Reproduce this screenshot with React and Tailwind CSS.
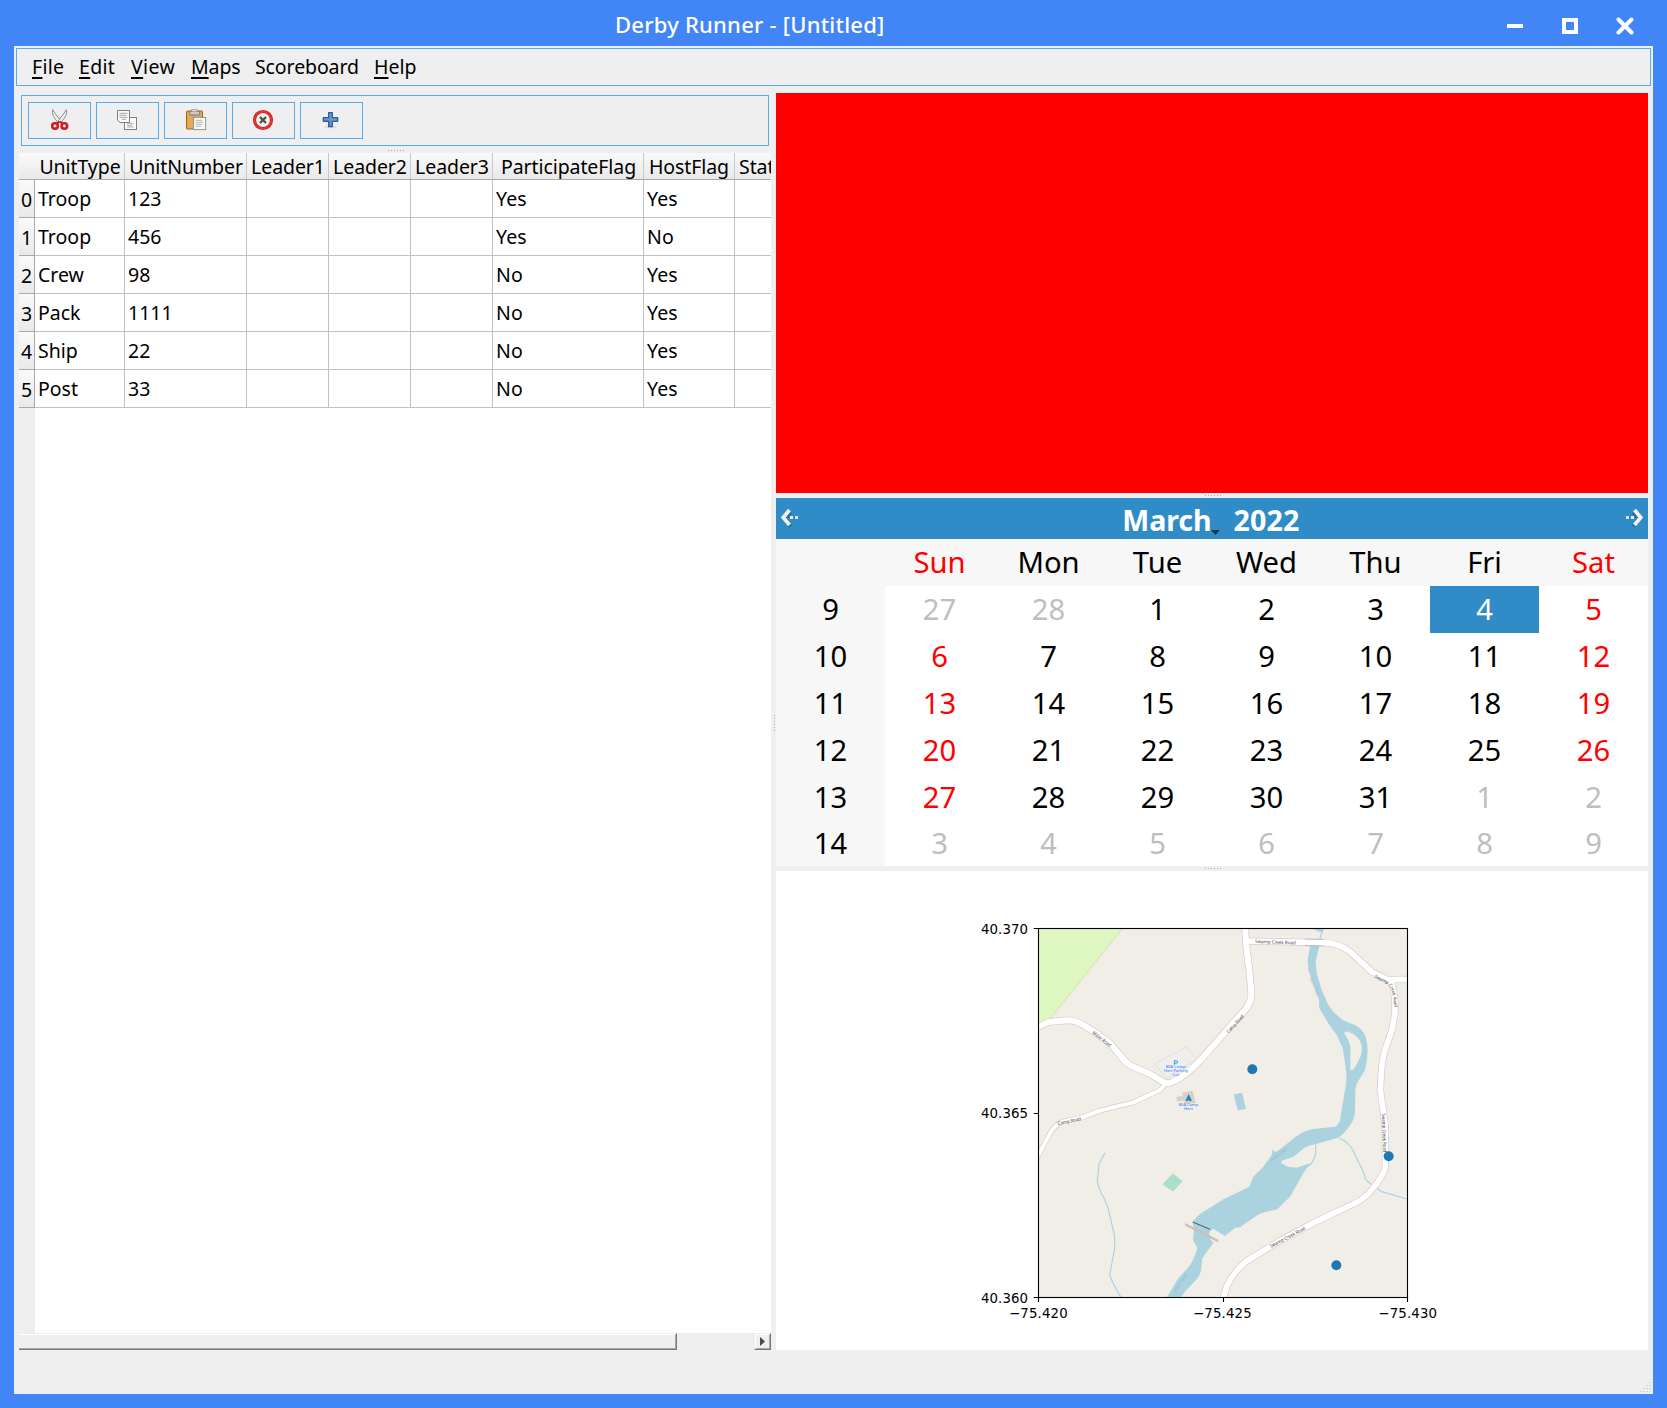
import React from "react";

const UI = "font-['Noto_Sans',sans-serif]";

/* ---------- toolbar icons ---------- */

function CutIcon() {
  return (
    <svg className="h-[23px] w-[23px]" viewBox="144 327 69 69" fill="none">
      <path d="M158 329 Q153 346 175 368 L182 362 Q167 344 158 329Z" fill="#f0f0ee" stroke="#858783" strokeWidth="2.8" />
      <path d="M199 329 Q204 346 182 368 L175 362 Q190 344 199 329Z" fill="#f0f0ee" stroke="#858783" strokeWidth="2.8" />
      <ellipse cx="165" cy="378" rx="8.5" ry="8" stroke="#cc1a1f" strokeWidth="7.5" />
      <ellipse cx="193" cy="378" rx="8.5" ry="8" stroke="#cc1a1f" strokeWidth="7.5" />
      <path d="M171 370 L178 365 M187 370 L180 365" stroke="#cc1a1f" strokeWidth="6" />
    </svg>
  );
}

function CopyIcon() {
  return (
    <svg className="h-[23px] w-[23px]" viewBox="348 327 69 69" fill="none" strokeWidth="3">
      <rect x="373.5" y="352.5" width="36" height="36" fill="#fafafa" stroke="#7f817c" />
      <path d="M381 371h19M381 376h16M381 381h19" stroke="#b0b2ae" />
      <path d="M352.5 331.500h36v36h-28l-8-7z" fill="#fafafa" stroke="#7f817c" />
      <path d="M358 340h24M358 346h21M358 352h24M366 358h12" stroke="#a6a8a4" />
    </svg>
  );
}

function PasteIcon() {
  return (
    <svg className="h-[23px] w-[23px]" viewBox="552 327 69 69" fill="none">
      <rect x="559.5" y="333" width="48" height="54" rx="3" fill="#e0ab5b" stroke="#a4660b" strokeWidth="3" />
      <rect x="569" y="334" width="30" height="11" rx="2" fill="#c9cbc7" stroke="#6c6e6a" strokeWidth="2.5" />
      <path d="M575 334v-5h17v5" fill="#eee" stroke="#888a85" strokeWidth="2.5" />
      <rect x="581" y="352" width="36" height="37" fill="#fafafa" stroke="#888a85" strokeWidth="2.6" />
      <path d="M587 361h20M587 367h23M587 373h20M587 379h16" stroke="#a9aba7" strokeWidth="2.5" />
    </svg>
  );
}

function StopIcon() {
  return (
    <svg className="h-[23px] w-[23px]" viewBox="756 327 69 69" fill="none">
      <circle cx="789" cy="360" r="25.5" fill="#f2f2f0" stroke="#d81e21" strokeWidth="9.5" />
      <circle cx="789" cy="360" r="25.5" stroke="#f26b6b" strokeWidth="1.5" />
      <path d="M780 351l18 18M798 351l-18 18" stroke="#4d504c" strokeWidth="7" />
    </svg>
  );
}

function AddIcon() {
  return (
    <svg className="h-[23px] w-[23px]" viewBox="960 327 69 69" fill="none">
      <ellipse cx="992" cy="381" rx="20" ry="4" fill="#dcdcdc" />
      <path
        d="M986 338h11v15h16v11h-16v16h-11v-16h-16v-11h16z"
        fill="#6b99cb"
        stroke="#2d5c9c"
        strokeWidth="4"
        strokeLinejoin="round"
      />
      <path d="M989 363v14M973 361h14" stroke="#4a7ab8" strokeWidth="3" />
    </svg>
  );
}

function Grip({ vertical }) {
  return (
    <span className={vertical ? "flex flex-col gap-[2px]" : "flex gap-[2px]"}>
      {[0, 1, 2, 3, 4, 5].map((i) => (
        <span key={i} className="h-px w-px bg-[#a8a8a8]" />
      ))}
    </span>
  );
}

/* ---------- window chrome ---------- */

function TitleBar() {
  return (
    <header className="flex h-[46px] shrink-0 items-center bg-[#4285f6] text-white">
      <div className="w-[615px]" />
      <h1 className="w-[851px] pt-[1px] text-[22px] leading-[30px] font-medium tracking-[0.23px] whitespace-nowrap">
        Derby Runner - [Untitled]
      </h1>
      <div className="ml-[41px] flex items-center pt-[6px]">
        <span className="h-[4px] w-[16px] bg-white" />
        <span className="ml-[39px] h-[16px] w-[16px] border-4 border-white" />
        <svg className="ml-[38px] h-[18px] w-[18px]" viewBox="0 0 18 18">
          <path d="M2.5 2.5l13 13M15.5 2.5l-13 13" stroke="#fff" strokeWidth="4" strokeLinecap="round" />
        </svg>
      </div>
    </header>
  );
}

const MENUS = [
  { key: "F", rest: "ile", w: "w-[47px]", track: "tracking-[0.3px]" },
  { key: "E", rest: "dit", w: "w-[52px]", track: "tracking-[0.3px]" },
  { key: "V", rest: "iew", w: "w-[60px]", track: "tracking-[0.4px]" },
  { key: "M", rest: "aps", w: "w-[64px]", track: "tracking-[-0.1px]" },
  { key: "", rest: "Scoreboard", w: "w-[119px]", track: "tracking-[-0.1px]" },
  { key: "H", rest: "elp", w: "w-[60px]", track: "tracking-[0px]" },
];

function MenuBar() {
  return (
    <nav className="mx-[2px] mt-[2px] flex h-[38px] shrink-0 border border-[#5aabe9] pl-[15px] text-[19.5px] leading-[36px]">
      {MENUS.map((m) => (
        <span key={m.rest} className={`${m.w} ${m.track} whitespace-nowrap`}>
          {m.key && <span className="underline decoration-2 underline-offset-[3px]">{m.key}</span>}
          {m.rest}
        </span>
      ))}
    </nav>
  );
}

/* ---------- units table ---------- */

const COLS = [
  { name: "UnitType", w: "w-[90px]", pad: "pl-[1px]" },
  { name: "UnitNumber", w: "w-[122px]", pad: "pl-[1px]" },
  { name: "Leader1", w: "w-[82px]", pad: "pl-[1px]" },
  { name: "Leader2", w: "w-[82px]", pad: "pl-[1px]" },
  { name: "Leader3", w: "w-[82px]", pad: "pl-[1px]" },
  { name: "ParticipateFlag", w: "w-[151px]", pad: "pl-[1px]" },
  { name: "HostFlag", w: "w-[91px]", pad: "" },
];

const ROWS = [
  ["Troop", "123", "", "", "", "Yes", "Yes"],
  ["Troop", "456", "", "", "", "Yes", "No"],
  ["Crew", "98", "", "", "", "No", "Yes"],
  ["Pack", "1111", "", "", "", "No", "Yes"],
  ["Ship", "22", "", "", "", "No", "Yes"],
  ["Post", "33", "", "", "", "No", "Yes"],
];

function UnitsTable() {
  return (
    <section className="flex h-[1197px] w-[752px] flex-col overflow-hidden text-[19.5px]">
      <div className="flex h-[27px] shrink-0 border-b border-[#a9a9a9] bg-linear-to-b from-[#fafafa] to-[#e9e9e9] leading-[27px] tracking-[-0.08px]">
        <div className="w-[16px] shrink-0" />
        {COLS.map((c) => (
          <div key={c.name} className={`${c.w} ${c.pad} flex shrink-0 justify-center border-r border-[#c9c9c9] whitespace-nowrap`}>
            {c.name}
          </div>
        ))}
        <div className="shrink-0 pl-[4px]">Stat</div>
      </div>
      {ROWS.map((r, i) => (
        <div key={i} className="flex h-[38px] shrink-0 border-b border-[#c2c2c2] bg-white leading-[37px]">
          <div className="-mb-px h-[38px] w-[16px] shrink-0 border-r border-b border-[#a9a9a9] bg-linear-to-b from-[#fafafa] to-[#e9e9e9] pt-[1px] pl-[2px]">
            {i}
          </div>
          {r.map((v, j) => (
            <div key={j} className={`${COLS[j].w} shrink-0 border-r border-[#c2c2c2] pl-[3px] ${j > 4 ? "tracking-[0.15px]" : ""}`}>
              {v}
            </div>
          ))}
        </div>
      ))}
      <div className="ml-[16px] flex-1 bg-white" />
      <div className="flex h-[17px] shrink-0 justify-between">
        <div className="w-[658px] border-t border-r border-b border-t-[#eee] border-r-[#777] border-b-[#777]">
          <div className="h-full border-t border-r border-b border-t-white border-r-[#aaa] border-b-[#aaa]" />
        </div>
        <div className="h-[17px] w-[17px] border border-t-[#eee] border-r-[#777] border-b-[#777] border-l-[#eee]">
          <div className="flex h-[15px] w-[15px] items-center justify-center border border-t-white border-r-[#aaa] border-b-[#aaa] border-l-white">
            <svg className="h-[9px] w-[5px]" viewBox="0 0 5 9">
              <path d="M0 0L5 4.5L0 9z" fill="#4a4a4a" />
            </svg>
          </div>
        </div>
      </div>
    </section>
  );
}

function LeftPane() {
  const icons = [CutIcon, CopyIcon, PasteIcon, StopIcon, AddIcon];
  return (
    <div className="w-[752px] shrink-0 pt-[2px]">
      <div className="ml-[2px] flex h-[51px] w-[748px] gap-[5px] border border-[#5aabe9] pt-[6px] pl-[6px]">
        {icons.map((Icon, i) => (
          <button key={i} className="flex h-[37px] w-[63px] items-center justify-center border border-[#5aabe9]">
            <Icon />
          </button>
        ))}
      </div>
      <div className="flex h-[7px] items-start justify-center pt-[4px] pl-[1px]">
        <Grip />
      </div>
      <UnitsTable />
    </div>
  );
}

/* ---------- calendar ---------- */

const WEEKS = [
  [9, 27, 28, 1, 2, 3, 4, 5],
  [10, 6, 7, 8, 9, 10, 11, 12],
  [11, 13, 14, 15, 16, 17, 18, 19],
  [12, 20, 21, 22, 23, 24, 25, 26],
  [13, 27, 28, 29, 30, 31, 1, 2],
  [14, 3, 4, 5, 6, 7, 8, 9],
];

function dayClass(week, col, day) {
  if (col === 0) return "bg-[#f7f7f7] text-black";
  if (week === 0 && day > 20) return "text-[#bebebe]";
  if (week >= 4 && day < 10) return "text-[#bebebe]";
  if (week === 0 && day === 4) return "bg-[#308cc6] text-white";
  if (col === 1 || col === 7) return "text-[#ff0000]";
  return "text-black";
}

function NavArrow({ flip }) {
  return (
    <svg className={flip ? "h-[22px] w-[20px] -scale-x-100" : "h-[22px] w-[20px]"} viewBox="0 0 20 22">
      <path d="M10.5 4L4.5 11l6 7" stroke="#1c4f70" strokeOpacity=".5" strokeWidth="4" fill="none" transform="translate(1.2 1.2)" />
      <path d="M10.5 3L4.3 10.500l6.2 7.500" stroke="#f1f1ef" strokeWidth="3.8" fill="none" />
      <rect x="11" y="9" width="3" height="3" fill="#e8eef2" />
      <rect x="16" y="9" width="3" height="3" fill="#d5e2ec" />
    </svg>
  );
}

function Calendar() {
  return (
    <section className="h-[368px] bg-white text-[29.2px]">
      <div className="flex h-[41px] items-center justify-between bg-[#308cc6] px-[3px] font-bold text-white">
        <div className="pb-[2px]"><NavArrow /></div>
        <div className="flex h-[41px] items-start text-[28.6px] leading-[43px]">
          <span className="-ml-[2px] tracking-[-0.1px]">March</span>
          <svg className="mt-[32px] h-[5px] w-[9px]" viewBox="0 0 9 5">
            <path d="M0 0h9L4.5 5z" fill="#10354c" />
          </svg>
          <span className="ml-[13px] tracking-[0.2px]">2022</span>
        </div>
        <div className="pb-[2px]"><NavArrow flip /></div>
      </div>
      <div className="grid h-[47px] grid-cols-8 bg-[#f7f7f7] text-center leading-[47px]">
        <span />
        {["Sun", "Mon", "Tue", "Wed", "Thu", "Fri", "Sat"].map((d) => (
          <span key={d} className={d[0] === "S" ? "text-[#ff0000]" : "text-black"}>
            {d}
          </span>
        ))}
      </div>
      {WEEKS.map((w, i) => (
        <div key={i} className={`grid grid-cols-8 text-center ${i === 5 ? "h-[45px] leading-[45px]" : "h-[47px] leading-[47px]"}`}>
          {w.map((d, j) => (
            <span key={j} className={dayClass(i, j, d)}>
              {d}
            </span>
          ))}
        </div>
      ))}
    </section>
  );
}

/* ---------- map chart ---------- */

const ROADS = [
  { w: 18, d: "M825 50L830 120L838 180L844 250Q845 275 825 300L790 338L690 452Q640 505 600 519Q585 522 575 513L540 492L485 468Q465 458 450 435L420 400L380 370L340 345Q315 331 295 331L240 335Q222 340 200 354" },
  { w: 12, d: "M583 522Q578 538 560 545L490 577L390 602L330 624L275 636Q255 645 240 670L200 745" },
  { w: 17, d: "M830 93L1060 98Q1110 100 1140 125L1205 185L1240 203L1258 211Q1285 206 1315 209" },
  { w: 17, d: "M1258 211Q1272 225 1275 280V310L1266 360L1245 420Q1236 450 1234 490L1231 540L1238 590L1246 650V770Q1240 800 1205 840Q1180 870 1150 882L1090 910L1020 944L930 992L830 1053Q790 1085 770 1130L758 1170" },
];

const RIVER =
  "M1020 108L1013 150L1015 180L1030 220L1047 270L1048 295L1075 340L1100 375L1118 415L1125 460L1130 500L1127 530L1118 580L1110 630Q1107 645 1095 650L1030 657Q1005 660 975 682L930 718L915 727L908 717L905 735L880 770L850 800L838 830L760 868L690 912Q680 920 668 935L672 960L669 990L682 1013Q675 1045 655 1072L625 1105L588 1166H630L645 1145L680 1108Q693 1090 693 1080L697 1045L730 998L718 985V965L730 956L765 978L795 953L810 952L855 920Q870 908 890 905L922 898L960 860L980 825L1000 790L1020 760L980 773L952 770L933 758L935 752L970 740L995 720Q1010 708 1035 703L1105 683Q1125 670 1145 638Q1155 620 1155 605L1156 540Q1158 520 1170 505L1185 480Q1193 450 1193 420Q1192 380 1175 360Q1160 345 1140 340L1115 328L1090 305L1075 285L1055 240L1040 190L1037 155L1048 108Z";

function MapArt() {
  return (
    <g clipPath="url(#plot)">
      <rect x="205" y="55" width="1107" height="1107" fill="#f1eee8" />
      <path d="M205 55H458L242 325L205 340z" fill="#def6c0" stroke="#c4dba6" strokeWidth="2" />
      <path d="M553 462L648 411L680 447L590 505z" fill="#eeeeee" stroke="#e0d4d0" strokeWidth="2" />
      <path d={RIVER} fill="#aad3df" />
      <path d="M1023 55H1065L1056 68z" fill="#aad3df" />
      <path d="M1122 370Q1125 362 1135 365Q1176 380 1176 420Q1174 440 1155 472Q1147 486 1141 478V410Q1138 392 1122 370z" fill="#f1eee8" />
      <g fill="none" stroke="#aad3df" strokeWidth="3.5">
        <path d="M1056 66L1047 95" />
        <path d="M1105 683Q1135 695 1147 718L1180 785L1187 808Q1200 822 1235 845L1312 867" />
        <path d="M1037 703V735L1025 760L1012 770" />
        <path d="M405 728L387 762L382 815Q385 830 395 852Q412 880 418 910L434 980V1015L419 1095Q425 1115 453 1162" />
      </g>
      <path d="M638 549L667 543L676 578L645 581L642 571L622 573L620 562L640 558z" fill="#d9d0c9" stroke="#c8bbb0" strokeWidth="1" />
      <path d="M792 554L815 549L827 596L804 600z" fill="#aad3df" stroke="#8fc3d3" strokeWidth="1" />
      <path d="M608 791L637 813L609 844L578 823z" fill="#aae0cb" stroke="#94d3bb" strokeWidth="1" />
      <path d="M645 943L744 993" stroke="#c9b5b0" strokeWidth="7" />
      <path d="M645 943L744 993" stroke="#e8dedb" strokeWidth="2" strokeDasharray="6 3" />
      <path d="M668 936L720 958" stroke="#555" strokeWidth="3" />
      {ROADS.map((r) => (
        <path key={r.d} d={r.d} fill="none" stroke="#cfcdc9" strokeWidth={r.w + 4} strokeLinejoin="round" />
      ))}
      {ROADS.map((r) => (
        <path key={r.d} d={r.d} fill="none" stroke="#fff" strokeWidth={r.w} strokeLinejoin="round" />
      ))}
      <path d="M1005 87L1060 88M1005 107L1060 108" stroke="#999" strokeWidth="1.5" />
      <g fontFamily="'Noto Sans', sans-serif" fontSize="14" fill="#3c3c3c" textAnchor="middle">
        <text transform="translate(916 101) rotate(2)" textLength="122" lengthAdjust="spacingAndGlyphs">Swamp Creek Road</text>
        <text transform="translate(393 391) rotate(37)" textLength="67" lengthAdjust="spacingAndGlyphs">Miller Road</text>
        <text transform="translate(299 638) rotate(-12)" textLength="71" lengthAdjust="spacingAndGlyphs">Camp Road</text>
        <text transform="translate(799 345) rotate(-47)" textLength="68" lengthAdjust="spacingAndGlyphs">Camp Road</text>
        <text transform="translate(955 986) rotate(-28)" textLength="118" lengthAdjust="spacingAndGlyphs">Swamp Creek Road</text>
        <text transform="translate(1238 669) rotate(88)" textLength="117" lengthAdjust="spacingAndGlyphs">Swamp Creek Road</text>
        <path id="bend" d="M1213 202L1243 217Q1262 226 1267 250L1275 300" fill="none" />
        <text textAnchor="start" fontSize="13"><textPath href="#bend">Swamp Creek Road</textPath></text>
      </g>
      <g fontFamily="'Noto Sans', sans-serif" fontSize="11" fill="#8fb3d8" textAnchor="middle" fontStyle="italic">
        <text transform="translate(1029 230) rotate(68)" textLength="58" lengthAdjust="spacingAndGlyphs">Unami Creek</text>
        <text transform="translate(928 737) rotate(-38)" textLength="60" lengthAdjust="spacingAndGlyphs">Unami Creek</text>
        <text transform="translate(633 1121) rotate(-55)" textLength="62" lengthAdjust="spacingAndGlyphs">Unami Creek</text>
      </g>
      <g fontFamily="'Noto Sans', sans-serif" fontSize="12.5" fill="#3f8cff" textAnchor="middle" fontWeight="500">
        <text x="617" y="475" textLength="60" lengthAdjust="spacingAndGlyphs">BSA Camp</text>
        <text x="618" y="487" textLength="72" lengthAdjust="spacingAndGlyphs">Hart Parking</text>
        <text x="618" y="499">Lot</text>
        <text x="655" y="588" textLength="58" lengthAdjust="spacingAndGlyphs">BSA Camp</text>
        <text x="655" y="600">Hart</text>
      </g>
      <path d="M613 464V452H619Q623 452 623 456Q623 459.500 619 459.500H613" fill="none" stroke="#1b9fd8" strokeWidth="2.800" />
      <path d="M648 573L656 556L664 573M652 573L656 564L660 573" fill="none" stroke="#1489c6" strokeWidth="3.500" />
      <g fill="#1f77b4">
        <circle cx="847" cy="478" r="15" />
        <circle cx="1256" cy="739" r="15" />
        <circle cx="1099" cy="1066" r="15" />
      </g>
    </g>
  );
}

function MapChart() {
  return (
    <section className="h-[479px] bg-white">
      <svg className="h-[479px] w-[872px]" viewBox="-582 -117 2616 1437">
        <defs>
          <clipPath id="plot">
            <rect x="205" y="55" width="1107" height="1107" />
          </clipPath>
        </defs>
        <MapArt />
        <rect x="205.500" y="55.500" width="1107" height="1107" fill="none" stroke="#000" strokeWidth="3.300" />
        <path d="M191 55.500h14M191 610.500h14M191 1162.500h14M205.500 1162v14M760.500 1162v14M1312.500 1162v14" stroke="#000" strokeWidth="3.300" />
        <g fontFamily="'DejaVu Sans', sans-serif" fontSize="40" fill="#000">
          <text x="33" y="72" textLength="141">40.370</text>
          <text x="33" y="624" textLength="141">40.365</text>
          <text x="33" y="1178" textLength="141">40.360</text>
          <text x="117" y="1224" textLength="176">−75.420</text>
          <text x="669" y="1224" textLength="176">−75.425</text>
          <text x="1225" y="1224" textLength="176">−75.430</text>
        </g>
      </svg>
    </section>
  );
}

export default function App() {
  return (
    <div className={`${UI} flex h-[1408px] w-[1667px] flex-col overflow-hidden bg-[#4285f6] text-black`}>
      <TitleBar />
      <div className="mx-[14px] flex h-[1348px] flex-col bg-[#efefef]">
        <MenuBar />
        <main className="mt-[7px] flex h-[1257px] pl-[5px]">
          <LeftPane />
          <div className="flex w-[5px] items-center justify-center pt-[2px] pl-[1px]">
            <Grip vertical />
          </div>
          <div className="w-[872px]">
            <div className="h-[400px] bg-[#ff0000]" />
            <div className="flex h-[5px] items-center justify-center pl-[1px]">
              <Grip />
            </div>
            <Calendar />
            <div className="flex h-[5px] items-center justify-center pl-[1px]">
              <Grip />
            </div>
            <MapChart />
          </div>
        </main>
        <footer className="flex flex-1 items-end justify-end p-[2px]">
          <svg className="h-[11px] w-[11px]" viewBox="0 0 11 11">
            <path d="M10 1v1M10 4v1M10 7v1M10 10v1M7 4v1M7 7v1M7 10v1M4 7v1M4 10v1M1 10v1" stroke="#b5b5b5" />
          </svg>
        </footer>
      </div>
    </div>
  );
}
